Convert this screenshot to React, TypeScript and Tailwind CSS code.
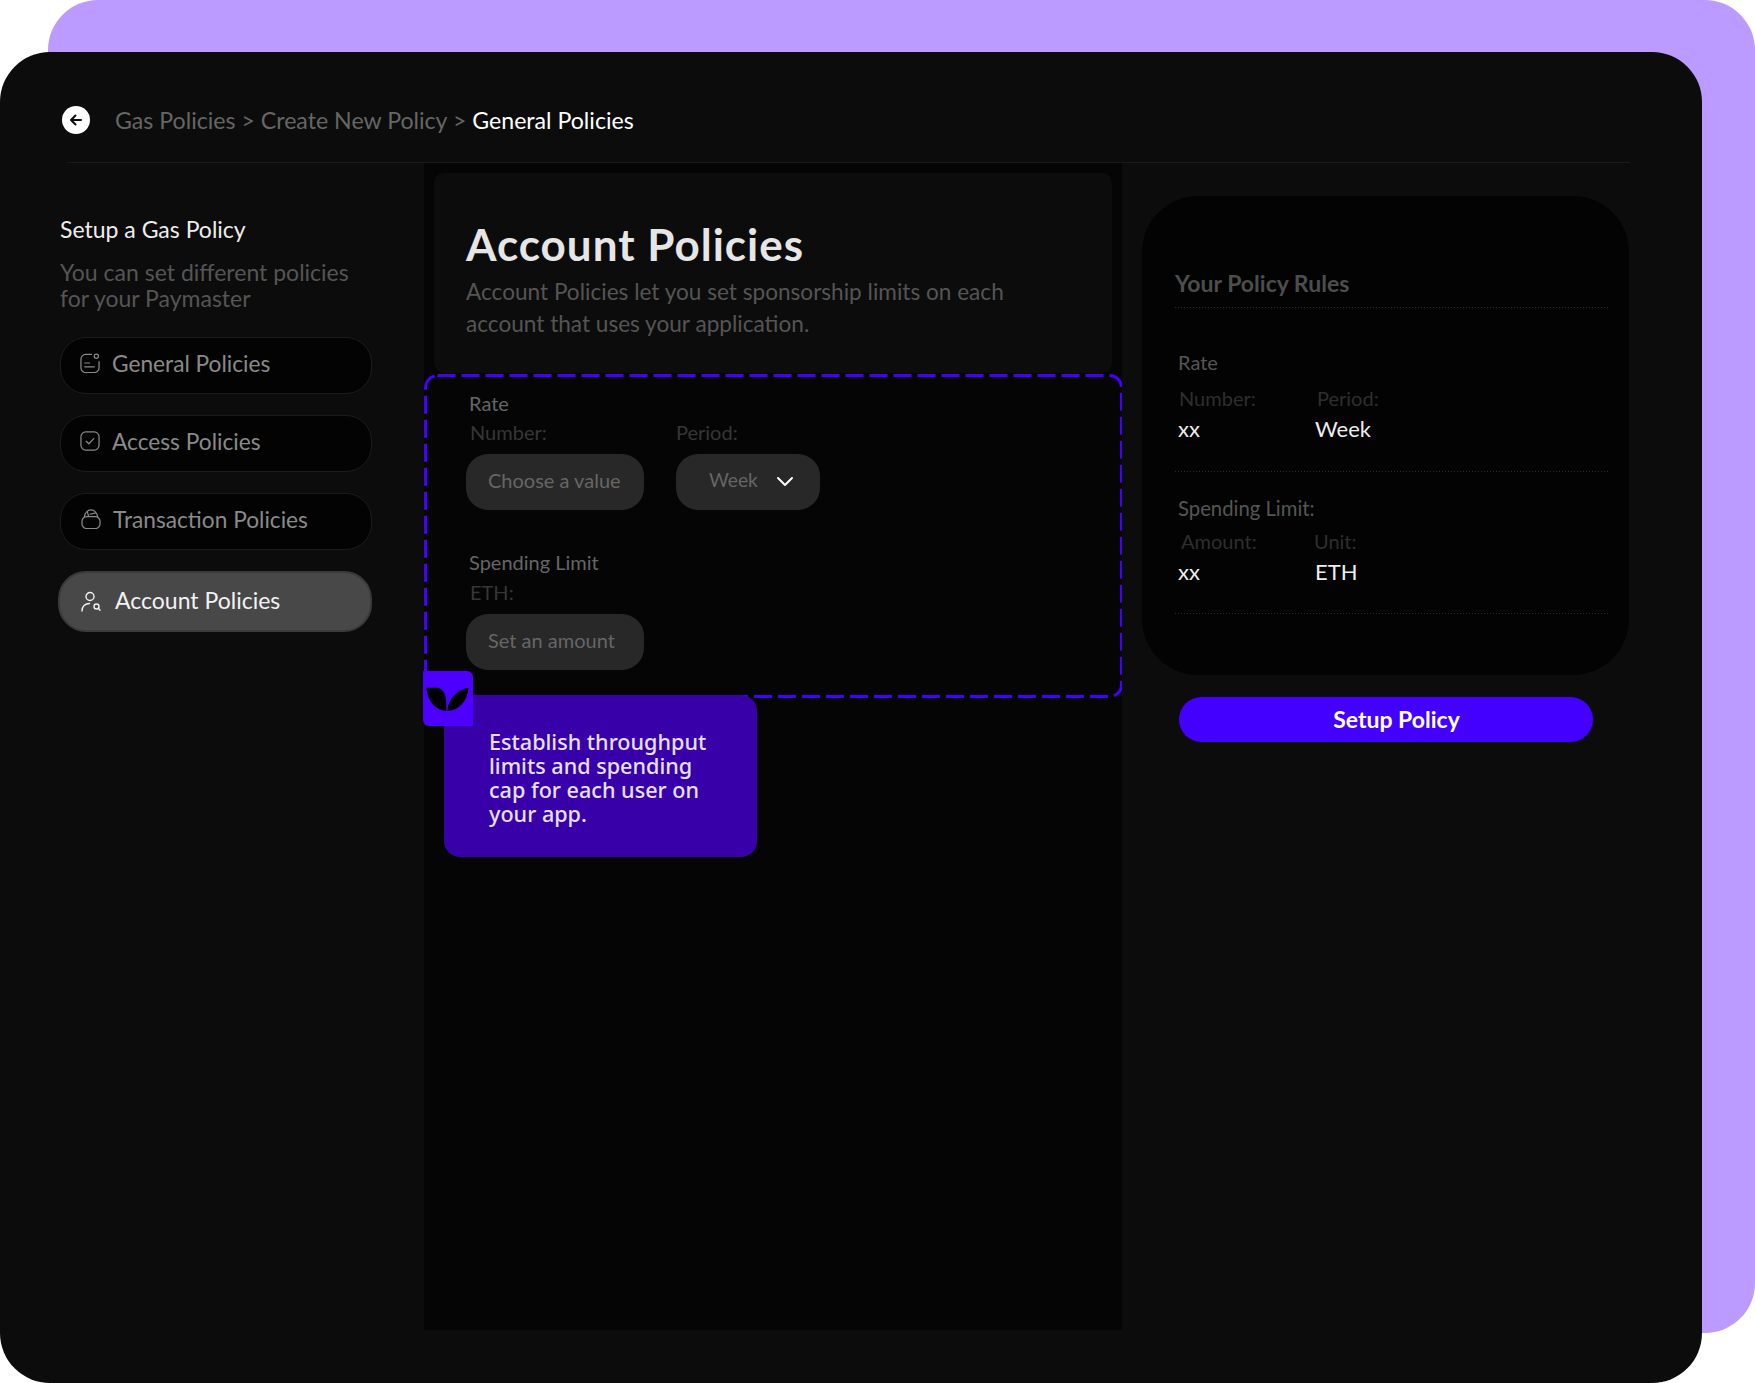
const NavIcon = ({ kind }: { kind: string }) => {
  if (kind === 'general') {
    return (
      <svg width="20" height="20" viewBox="0 0 21 21" fill="none" stroke="currentColor" strokeWidth="1.3" strokeLinecap="round">
        <path d="M12 1.500H6a5 5 0 0 0-5 5v9a5 5 0 0 0 5 5h9a5 5 0 0 0 5-5V9" />
        <circle cx="17.200" cy="3.400" r="2.200" />
        <path d="M5 10.500h5M5 14.500h10" />
      </svg>
    );
  }
  if (kind === 'access') {
    return (
      <svg width="20" height="20" viewBox="0 0 21 21" fill="none" stroke="currentColor" strokeWidth="1.3" strokeLinecap="round" strokeLinejoin="round">
        <rect x="1" y="1" width="19" height="19" rx="5" />
        <path d="M6.500 10.800l2.800 2.600 5.200-5.400" />
      </svg>
    );
  }
  if (kind === 'transaction') {
    return (
      <svg width="20" height="20" viewBox="0 0 21 21" fill="none" stroke="currentColor" strokeWidth="1.3" strokeLinecap="round" strokeLinejoin="round">
        <rect x="1" y="8" width="19" height="12.500" rx="5" />
        <path d="M3.500 8.500C4 4 7 1 10.500 1c3.500 0 6.500 3 7 7.500M6.500 2.500l1.500 5M9.500 5.500l6-1.500" />
      </svg>
    );
  }
  return (
    <svg width="20" height="21" viewBox="0 0 20 21" fill="none" stroke="currentColor" strokeWidth="1.4" strokeLinecap="round">
      <circle cx="9" cy="5.500" r="4" />
      <path d="M1 20c0-4.500 3-7.500 7.500-7.500" />
      <circle cx="15.500" cy="15.500" r="2.500" />
      <path d="M17.500 17.500l1.500 1.800" />
    </svg>
  );
};

const navItems = [
  { label: 'General Policies', kind: 'general', pad: 'pl-[19px]' },
  { label: 'Access Policies', kind: 'access', pad: 'pl-[19px]' },
  { label: 'Transaction Policies', kind: 'transaction', pad: 'pl-[20px]' },
];

// dotted rule of the right panel
const Rule = () => (
  <div className="h-px w-full bg-[repeating-linear-gradient(90deg,#2c2c2c_0,#2c2c2c_1px,transparent_1px,transparent_3px)]" />
);

export default function App() {
  return (
    <div className="relative w-[1755px] h-[1383px] overflow-hidden bg-white font-['Lato',sans-serif]">
      <div className="absolute left-[48px] top-0 w-[1707px] h-[1333px] rounded-[50px] bg-[#bb9bff]" />

      <div className="relative mt-[52px] w-[1702px] h-[1331px] pt-[54px] rounded-[50px] bg-[#0c0c0c]">
        <div className="ml-[67px] mr-[72px] h-[57px] border-b border-[#1a1a1a]">
          <div className="flex items-start">
            <div className="-ml-[5px] flex h-[28px] w-[28px] items-center justify-center rounded-full bg-white">
              <svg width="16" height="16" viewBox="0 0 16 16" fill="none" stroke="#0c0c0c" strokeWidth="2" strokeLinecap="round" strokeLinejoin="round">
                <path d="M13 8H3.500M7.500 3.500 3 8l4.500 4.500" />
              </svg>
            </div>
            <div className="ml-[25px] text-[23.150px] leading-[28px] text-[#666666]">
              Gas Policies &gt; Create New Policy &gt; <span className="text-white">General Policies</span>
            </div>
          </div>
        </div>

        <div className="flex">
          <aside className="w-[424px] pl-[60px] pt-[52px]">
            <div className="text-[23px] leading-[28px] text-[#eeeeee]">Setup a Gas Policy</div>
            <div className="mt-[16px] text-[23px] leading-[26px] text-[#555555]">
              You can set different policies
              <br />
              for your Paymaster
            </div>
            <div className="mt-[26px] flex flex-col gap-[21px]">
              {navItems.map((item) => (
                <div key={item.label} className={`flex h-[57px] w-[312px] items-center gap-[12px] rounded-[26px] border border-[#1c1c1c] bg-[#030303] text-[22.700px] text-[#8a8a8a] ${item.pad}`}>
                  <div className="-mt-[5px]">
                    <NavIcon kind={item.kind} />
                  </div>
                  <span className="-mt-[3px]">{item.label}</span>
                </div>
              ))}
              <div className="-ml-[2px] flex h-[61px] w-[314px] items-center gap-[14px] rounded-[28px] border-2 border-[#3a3a3a] bg-[#484848] pl-[21px] text-[23px] text-[#f2f2f2]">
                <NavIcon kind="account" />
                <span className="-mt-[2px]">Account Policies</span>
              </div>
            </div>
          </aside>

          <main className="relative w-[698px] h-[1167px] bg-[#050505] pt-[10px]">
            <div className="mx-[10px] h-[200px] rounded-[10px] bg-[#0c0c0c] pl-[32px] pt-[46px]">
              <div className="text-[44px] leading-[50px] tracking-[1px] font-bold text-[#e6e6e6]">Account Policies</div>
              <div className="mt-[7px] text-[22.600px] leading-[32px] text-[#555555]">
                Account Policies let you set sponsorship limits on each
                <br />
                account that uses your application.
              </div>
            </div>

            <div className="relative mt-[1px] h-[324px] pl-[42px] pt-[17px]">
              <svg className="absolute inset-0 h-full w-full" fill="none">
                <rect x="1.500" y="1.500" width="696" height="321" rx="12" stroke="#4400ff" strokeWidth="3" strokeDasharray="18 6" />
              </svg>
              <div className="ml-[3px] text-[20px] leading-[24px] text-[#666666]">Rate</div>
              <div className="mt-[5px] flex text-[20px] leading-[24px] text-[#363636]">
                <div className="ml-[4px] w-[206px]">Number:</div>
                <div>Period:</div>
              </div>
              <div className="mt-[10px] flex gap-[32px]">
                <div className="flex h-[56px] w-[178px] items-center rounded-[22px] bg-[#282828] pb-[5px] pl-[22px] text-[20px] text-[#666666]">Choose a value</div>
                <div className="flex h-[56px] w-[144px] items-center rounded-[22px] bg-[#282828] pb-[4px] pl-[33px] text-[19.200px] text-[#666666]">
                  Week
                  <svg className="ml-[18px] mt-[2px]" width="18" height="11" viewBox="0 0 18 11" fill="none" stroke="#ffffff" strokeWidth="2" strokeLinecap="round" strokeLinejoin="round">
                    <path d="M2 2l7 7 7-7" />
                  </svg>
                </div>
              </div>
              <div className="ml-[3px] mt-[40px] text-[20px] leading-[24px] text-[#666666]">Spending Limit</div>
              <div className="ml-[4px] mt-[6px] text-[20px] leading-[24px] text-[#363636]">ETH:</div>
              <div className="mt-[10px] flex h-[56px] w-[178px] items-center rounded-[22px] bg-[#282828] pb-[4px] pl-[22px] text-[20px] text-[#666666]">Set an amount</div>
            </div>

            <div className="absolute left-[20px] top-[532px] h-[162px] w-[313px] rounded-[16px] bg-[#3700a8] pl-[45px] pt-[35px] font-['Noto_Sans',sans-serif] text-[21.600px] font-medium leading-[24px] text-[#e8e0f8]">
              Establish throughput
              <br />
              limits and spending
              <br />
              cap for each user on
              <br />
              your app.
            </div>
            <div className="absolute left-[-1px] top-[508px] h-[55px] w-[50px] rounded-tr-[6px] rounded-bl-[6px] bg-[#4d00ff]">
              <svg className="absolute inset-0" width="50" height="55" viewBox="0 0 150 165" fill="#000000">
                <path d="M10 50H45C62 54 72 72 70 120C40 118 14 95 10 50Z" />
                <path d="M137 50C112 54 78 72 73 120C105 118 132 95 137 50Z" />
              </svg>
            </div>
          </main>

          <div className="pl-[20px] pt-[33px]">
            <div className="h-[479px] w-[487px] rounded-[56px] bg-[#030303] pl-[33px] pr-[20px] pt-[74px]">
              <div className="pb-[11px] text-[23px] leading-[26px] font-bold text-[#4d4d4d]">Your Policy Rules</div>
              <Rule />
              <div className="h-[163px] pl-[3px] pt-[42px]">
                <div className="text-[20px] leading-[24px] text-[#555555]">Rate</div>
                <div className="mt-[12px] flex text-[20px] leading-[24px] text-[#2e2e2e]">
                  <div className="ml-[1px] w-[138px]">Number:</div>
                  <div>Period:</div>
                </div>
                <div className="mt-[6px] flex text-[22px] leading-[26px] text-[#eeeeee]">
                  <div className="w-[138px]">xx</div>
                  <div className="-ml-[1px]">Week</div>
                </div>
              </div>
              <Rule />
              <div className="h-[141px] pl-[3px] pt-[24px]">
                <div className="text-[20.300px] leading-[24px] text-[#555555]">Spending Limit:</div>
                <div className="mt-[9px] flex text-[20px] leading-[24px] text-[#2e2e2e]">
                  <div className="ml-[3px] w-[133px]">Amount:</div>
                  <div>Unit:</div>
                </div>
                <div className="mt-[6px] flex text-[22px] leading-[26px] text-[#eeeeee]">
                  <div className="w-[138px]">xx</div>
                  <div className="-ml-[1px]">ETH</div>
                </div>
              </div>
              <Rule />
            </div>
            <div className="ml-[37px] mt-[22px] flex h-[45px] w-[414px] items-center justify-center rounded-full bg-[#4400ff] pl-[21px] text-[23px] font-bold text-white">Setup Policy</div>
          </div>
        </div>
      </div>
    </div>
  );
}
